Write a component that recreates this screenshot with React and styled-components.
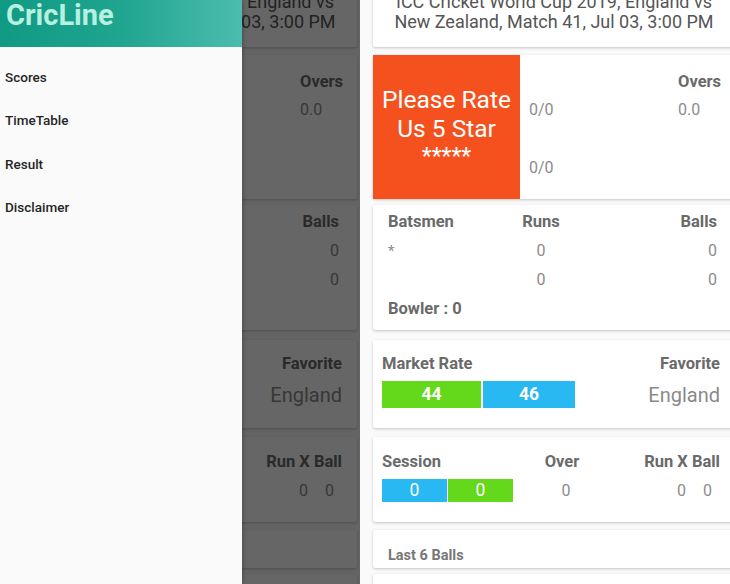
import React from "react";
import styled, { createGlobalStyle } from "styled-components";

const Global = createGlobalStyle`
  html, body { margin: 0; padding: 0; background: #fafafa; }
  body { font-family: Roboto, "Noto Sans", Arial, sans-serif; }
  * { box-sizing: border-box; }
`;

const Stage = styled.div`
  display: flex;
  width: 730px;
  height: 584px;
  overflow: hidden;
`;

const Phone = styled.div`
  position: relative;
  flex: none;
  width: ${(p) => p.$w}px;
  height: 584px;
  overflow: hidden;
  background: #fafafa;
  padding-left: ${(p) => p.$pad || 0}px;
`;

const Feed = styled.div`
  display: flex;
  flex-direction: column;
  margin-top: -23px;
  margin-left: ${(p) => p.$inset || 0}px;
`;

const Card = styled.div`
  flex: none;
  width: 362px;
  background: #fff;
  border-radius: 2px;
  box-shadow: 0 1px 3px rgba(0, 0, 0, 0.22);
  margin-top: ${(p) => (p.$gap === undefined ? 8 : p.$gap)}px;
`;

const TitleCard = styled(Card)`
  padding: 15px 0;
  text-align: center;
  font-size: 18px;
  line-height: 20px;
  color: #555;
  white-space: nowrap;
`;

const ScoreCard = styled(Card)`
  display: grid;
  grid-template-columns: 147px 1fr;
  height: 144px;
`;

const RateBlock = styled.div`
  background: #f4511e;
  color: #fff;
  display: flex;
  flex-direction: column;
  align-items: center;
  justify-content: center;
  font-size: 24.5px;
  line-height: 29px;
  text-align: center;
`;

const Stars = styled.span`
  font-size: 23px;
  line-height: 27px;
`;

const ScoreInfo = styled.div`
  display: grid;
  grid-template-columns: 1fr 42px;
  grid-auto-rows: 20px;
  row-gap: 8px;
  padding: 17px 15px 0 9px;
  line-height: 20px;
`;

const Label = styled.div`
  font-size: 16.5px;
  font-weight: 700;
  color: #6a6a6a;
  line-height: 20px;
  white-space: nowrap;
  text-align: ${(p) => p.$align || "left"};
`;

const Value = styled.div`
  font-size: ${(p) => p.$size || 16}px;
  color: #8c8c8c;
  line-height: 20px;
  white-space: nowrap;
  text-align: ${(p) => p.$align || "left"};
  margin-top: ${(p) => p.$mt || 0}px;
  padding-left: ${(p) => p.$shift || 0}px;
`;

const BatCard = styled(Card)`
  display: grid;
  grid-template-columns: 118px 70px 1fr;
  row-gap: 9px;
  padding: 7px 18px 11px 15px;
`;

const WideRow = styled.div`
  grid-column: 1 / -1;
`;

const MarketCard = styled(Card)`
  display: flex;
  justify-content: space-between;
  padding: 14px 15px 20px 9px;
`;

const Col = styled.div`
  display: flex;
  flex-direction: column;
  align-items: ${(p) => p.$align || "flex-start"};
`;

const Bars = styled.div`
  display: flex;
  gap: ${(p) => p.$gap}px;
  margin-top: ${(p) => p.$mt || 0}px;
`;

const Bar = styled.div`
  width: ${(p) => p.$w}px;
  height: ${(p) => p.$h}px;
  background: ${(p) => p.$color};
  color: #fff;
  font-size: 17.5px;
  font-weight: ${(p) => (p.$bold ? 700 : 400)};
  line-height: ${(p) => p.$h}px;
  text-align: center;
`;

const Big = styled.div`
  font-size: 20px;
  line-height: 24px;
  color: #8a8a8a;
  margin-top: 9px;
`;

const SessionCard = styled(Card)`
  display: grid;
  grid-template-columns: 140px 80px 1fr;
  row-gap: 7px;
  align-items: center;
  padding: 15px 15px 20px 9px;
`;

const Pair = styled.div`
  display: flex;
  justify-content: flex-end;
  gap: 17px;
  padding-right: 8px;
  font-size: 16px;
  color: #8c8c8c;
  line-height: 20px;
`;

const LastCard = styled(Card)`
  padding: 16px 15px 2px;
  font-size: 14.5px;
  font-weight: 700;
  color: #777;
  line-height: 20px;
`;

const TailCard = styled(Card)`
  height: 40px;
`;

const Scrim = styled.div`
  position: absolute;
  inset: 0;
  background: rgba(0, 0, 0, 0.6);
  z-index: 1;
`;

const Drawer = styled.nav`
  position: absolute;
  top: 0;
  left: 0;
  bottom: 0;
  width: 242px;
  background: #fafafa;
  z-index: 2;
  box-shadow: 1px 0 4px rgba(0, 0, 0, 0.25);
  display: flex;
  flex-direction: column;
`;

const DrawerHead = styled.div`
  height: 47px;
  background: linear-gradient(90deg, #109a83 0%, #1fa590 50%, #4cbcae 100%);
  padding-left: 6px;
`;

const Brand = styled.div`
  font-size: 29px;
  font-weight: 700;
  line-height: 31px;
  color: #b8f0e0;
`;

const Menu = styled.ul`
  list-style: none;
  margin: 0;
  padding: 9px 0 0 5px;
`;

const MenuItem = styled.li`
  font-size: 13.5px;
  font-weight: 500;
  color: #262626;
  line-height: 43.3px;
`;

function Feedback({ inset }) {
  return (
    <Feed $inset={inset}>
      <TitleCard $gap={0}>
        ICC Cricket World Cup 2019, England vs
        <br />
        New Zealand, Match 41, Jul 03, 3:00 PM
      </TitleCard>
      <ScoreCard>
        <RateBlock>
          <span>Please Rate</span>
          <span>Us 5 Star</span>
          <Stars>*****</Stars>
        </RateBlock>
        <ScoreInfo>
          <span />
          <Label>Overs</Label>
          <Value>0/0</Value>
          <Value>0.0</Value>
          <Value $mt={30}>0/0</Value>
        </ScoreInfo>
      </ScoreCard>
      <BatCard $gap={6}>
        <Label>Batsmen</Label>
        <Label $align="center">Runs</Label>
        <Label $align="right">Balls</Label>
        <Value $size={15}>*</Value>
        <Value $size={16} $align="center">0</Value>
        <Value $size={16} $align="right">0</Value>
        <Value $size={15}></Value>
        <Value $size={16} $align="center">0</Value>
        <Value $size={16} $align="right">0</Value>
        <WideRow>
          <Label>Bowler : 0</Label>
        </WideRow>
      </BatCard>
      <MarketCard $gap={10}>
        <Col>
          <Label>Market Rate</Label>
          <Bars $gap={2} $mt={7}>
            <Bar $w={99} $h={27} $color="#64d81b" $bold>
              44
            </Bar>
            <Bar $w={92} $h={27} $color="#28b8f2" $bold>
              46
            </Bar>
          </Bars>
        </Col>
        <Col $align="flex-end">
          <Label>Favorite</Label>
          <Big>England</Big>
        </Col>
      </MarketCard>
      <SessionCard $gap={9}>
        <Label>Session</Label>
        <Label $align="center">Over</Label>
        <Label $align="right">Run X Ball</Label>
        <Bars $gap={1}>
          <Bar $w={65} $h={23} $color="#28b8f2">
            0
          </Bar>
          <Bar $w={65} $h={23} $color="#64d81b">
            0
          </Bar>
        </Bars>
        <Value $align="center" $shift={8}>
          0
        </Value>
        <Pair>
          <span>0</span>
          <span>0</span>
        </Pair>
      </SessionCard>
      <LastCard>Last 6 Balls</LastCard>
      <TailCard $gap={6} />
    </Feed>
  );
}

export default function App() {
  return (
    <>
      <Global />
      <Stage>
        <Phone $w={360}>
          <Feedback inset={-5} />
          <Scrim />
          <Drawer>
            <DrawerHead>
              <Brand>CricLine</Brand>
            </DrawerHead>
            <Menu>
              <MenuItem>Scores</MenuItem>
              <MenuItem>TimeTable</MenuItem>
              <MenuItem>Result</MenuItem>
              <MenuItem>Disclaimer</MenuItem>
            </Menu>
          </Drawer>
        </Phone>
        <Phone $w={370} $pad={13}>
          <Feedback inset={0} />
        </Phone>
      </Stage>
    </>
  );
}
